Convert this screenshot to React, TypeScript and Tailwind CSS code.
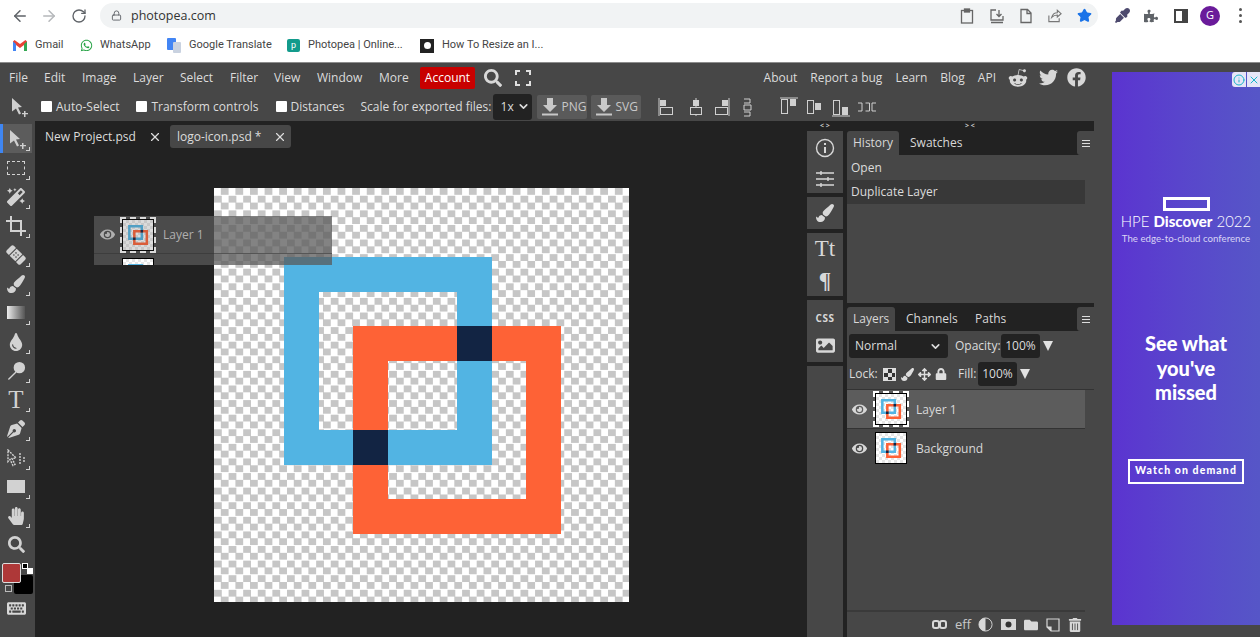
import type { ReactNode } from "react";
import { ArrowLeft, ArrowRight, RotateCw, Lock, Star, ChevronDown, X, Info } from "lucide-react";
import {
  FaMagic, FaBandAid, FaPaintBrush, FaTint, FaPenNib, FaHandPaper, FaSearch, FaKeyboard,
  FaFolder, FaTrashAlt, FaImage, FaEye, FaLock, FaArrowsAlt, FaPuzzlePiece,
  FaEyeDropper, FaRedditAlien, FaTwitter, FaFacebook, FaWhatsapp,
} from "react-icons/fa";

function Art({ size }: { size: number }) {
  return (
    <svg width={size} height={size} viewBox="0 0 415 415" className="block">
      <path d="M70 69h208v208H70z M105 104v138h138V104z" fill="#52b4e3" fillRule="evenodd" />
      <path d="M139 138h208v208H139z M174 173v138h138V173z" fill="#fe6236" fillRule="evenodd" />
      <rect x="243" y="138" width="35" height="35" fill="#122443" />
      <rect x="139" y="242" width="35" height="35" fill="#122443" />
    </svg>
  );
}

function Thumb({ dashed }: { dashed?: boolean }) {
  return (
    <div className={`w-[32px] h-[32px] border border-black bg-[repeating-conic-gradient(#e6e6e6_0_25%,#fff_0_50%)] bg-[length:6px_6px] shrink-0 ${dashed ? "outline-2 outline-dashed outline-white" : ""}`}>
      <Art size={30} />
    </div>
  );
}

function Tool({ children, active, noCorner }: { children: ReactNode; active?: boolean; noCorner?: boolean }) {
  return (
    <div className={`relative h-[29px] w-[32px] flex items-center justify-center text-[#d2d2d2] ${active ? "bg-[#5c5c5c] border-l-[3px] border-[#3f86f2]" : ""}`}>
      {children}
      {!noCorner && <span className="absolute right-[2px] bottom-[2px] w-[4px] h-[4px] border-r border-b border-[#d2d2d2]" />}
    </div>
  );
}

function MoveIcon({ size = 20 }: { size?: number }) {
  return (
    <svg width={size} height={size} viewBox="0 0 20 20" fill="#cfcfcf">
      <path d="M2 1l10 9-4 .5 3 6-2 1-3-6-4 3z" />
      <path d="M14 14h1.500v2H18v1.300h-2.500V20H14v-2.700h-2V16h2z" />
    </svg>
  );
}

function AlignIcon({ kind }: { kind: number }) {
  const stroke = "#d0d0d0";
  const shapes: Record<number, ReactNode> = {
    0: <><path d="M1 1v18" stroke={stroke} /><rect x="2" y="3" width="6" height="6" fill={stroke} /><rect x="2.500" y="10.500" width="12" height="7" fill="none" stroke={stroke} /></>,
    1: <><path d="M9 1v18" stroke={stroke} /><rect x="6" y="3" width="6" height="6" fill={stroke} /><rect x="3.500" y="10.500" width="11" height="7" fill="#474747" stroke={stroke} /></>,
    2: <><path d="M16 1v18" stroke={stroke} /><rect x="9" y="3" width="6" height="6" fill={stroke} /><rect x="2.500" y="10.500" width="12" height="7" fill="none" stroke={stroke} /></>,
    3: <><path d="M6 2h6v4H6M6 8h7v5H6zM6 15h6v4H6" fill="none" stroke={stroke} /></>,
    4: <><path d="M1 1h18" stroke={stroke} /><rect x="2.500" y="2.500" width="6" height="14" fill="none" stroke={stroke} /><rect x="11" y="2" width="6" height="7" fill={stroke} /></>,
    5: <><rect x="2.500" y="3.500" width="6" height="13" fill="none" stroke={stroke} /><rect x="10" y="6" width="6" height="7" fill={stroke} /></>,
    6: <><path d="M1 19h18" stroke={stroke} /><rect x="2.500" y="3.500" width="6" height="14" fill="none" stroke={stroke} /><rect x="11" y="10" width="6" height="8" fill={stroke} /></>,
    7: <><path d="M1 6h4v8H1M8.500 6h4v8h-4M19 6h-4v8h4" fill="none" stroke={stroke} /></>,
  };
  return <svg width="20" height="20" viewBox="0 0 20 20">{shapes[kind]}</svg>;
}

function SideGroup({ children, h }: { children: ReactNode; h: string }) {
  return <div className={`${h} bg-[#474747] flex flex-col items-center justify-around text-[#d8d8d8]`}>{children}</div>;
}

function Check11() {
  return <input type="checkbox" readOnly className="block appearance-none w-[11px] h-[11px] bg-white rounded-[1px]" />;
}

function ExportBtn({ label }: { label: string }) {
  return (
    <div className="flex items-center gap-[4px] h-[24px] w-[50px] pl-[5px] bg-[#5a5a5a] rounded-[2px] text-[#c8c8c8]">
      <svg width="16" height="18" viewBox="0 0 16 18" fill="#c8c8c8"><path d="M5 0h6v7h4l-7 7-7-7h4z" /><rect y="15.500" width="16" height="2" /></svg>
      <span>{label}</span>
    </div>
  );
}

function Tri() {
  return <span className="block w-0 h-0 border-l-[5px] border-r-[5px] border-t-[10px] border-l-transparent border-r-transparent border-t-[#e2e2e2]" />;
}

function LayerRow({ name, selected, dashed }: { name: string; selected?: boolean; dashed?: boolean }) {
  return (
    <div className={`h-[38px] flex items-center w-[238px] ${selected ? "bg-[#5c5c5c]" : ""}`}>
      <FaEye size={15} className="ml-[5px] text-[#d8d8d8]" />
      <div className="ml-[8px]"><Thumb dashed={dashed} /></div>
      <span className="ml-[9px] pt-[2px] text-[#d8d8d8]">{name}</span>
    </div>
  );
}

function PanelTabs({ tabs }: { tabs: { label: string; w: string; pl: string; on?: boolean }[] }) {
  return (
    <div className="h-[24px] bg-[#222] flex items-stretch text-[#d8d8d8]">
      {tabs.map((t) => (
        <div key={t.label} className={`${t.w} ${t.pl} flex items-center ${t.on ? "bg-[#474747] rounded-t-[3px]" : ""}`}>{t.label}</div>
      ))}
      <div className="ml-auto w-[17px] bg-[#474747] rounded-l-[3px] flex flex-col items-center justify-center gap-[2px]">
        <span className="w-[8px] h-px bg-[#ddd]" /><span className="w-[8px] h-px bg-[#ddd]" /><span className="w-[8px] h-px bg-[#ddd]" />
      </div>
    </div>
  );
}

export default function App() {
  const menuItems = [
    ["File", "w-[35px]"], ["Edit", "w-[38px]"], ["Image", "w-[51px]"], ["Layer", "w-[47px]"], ["Select", "w-[50px]"],
    ["Filter", "w-[44px]"], ["View", "w-[43px]"], ["Window", "w-[62px]"], ["More", "w-[41px]"],
  ];
  return (
    <div className="w-[1260px] h-[640px] overflow-hidden bg-white flex flex-col font-['Open_Sans',sans-serif] text-[12px]">
      {/* browser chrome */}
      <div className="h-[63px] shrink-0 border-b border-[#8c8c8c] text-[#444]">
        <div className="h-[31px] flex items-center">
          <ArrowLeft size={18} className="ml-[11px] text-[#5f6368]" />
          <ArrowRight size={18} className="ml-[11px] text-[#b5b8bb]" />
          <RotateCw size={16} className="ml-[13px] text-[#5f6368]" />
          <div className="ml-[13px] w-[998px] h-[25px] rounded-full bg-[#f1f3f4] flex items-center pl-[11px]">
            <Lock size={11} className="text-[#5f6368]" />
            <span className="ml-[9px] pt-[1px] text-[12.500px] text-[#333]">photopea.com</span>
            <div className="ml-auto flex items-center gap-[15px] pr-[6px] text-[#666]">
              <svg width="14" height="16" viewBox="0 0 14 16" fill="none" stroke="#666" strokeWidth="1.300"><rect x="1.500" y="2.500" width="11" height="12.500" /><rect x="4.500" y="1" width="5" height="3" fill="#666" /></svg>
              <svg width="16" height="16" viewBox="0 0 16 16" fill="none" stroke="#666" strokeWidth="1.300"><path d="M7 2H2v10h12V8M10 2v6M7.500 6l2.500 2.500L12.500 6M2 14.500h12" /></svg>
              <svg width="12" height="16" viewBox="0 0 12 16" fill="none" stroke="#666" strokeWidth="1.300"><path d="M1 1.500h6.500l3.500 3.500v9.500H1zM7 1.500v4h4" /></svg>
              <svg width="15" height="15" viewBox="0 0 16 16" fill="none" stroke="#777" strokeWidth="1.200"><path d="M2 8v6.500h11V11M5 10c1-4 4-5 6-5V2.500L15 6l-4 3.500V7.500c-2 0-4 .5-6 2.500z" /></svg>
              <Star size={15} fill="#1a73e8" className="text-[#1a73e8]" />
            </div>
          </div>
          <FaEyeDropper size={15} className="ml-[17px] text-[#4d4a6e]" />
          <FaPuzzlePiece size={14} className="ml-[14px] text-[#5f6368]" />
          <svg width="14" height="14" viewBox="0 0 14 14" className="ml-[16px]"><rect x="1" y="1" width="12" height="12" fill="none" stroke="#444" strokeWidth="2" /><rect x="8" y="1" width="5" height="12" fill="#444" /></svg>
          <div className="ml-[12px] w-[20px] h-[20px] rounded-full bg-[#6a1b9a] text-white text-[11px] flex items-center justify-center">G</div>
          <div className="ml-[19px] flex flex-col gap-[3px]">
            <span className="w-[3px] h-[3px] rounded-full bg-[#555]" /><span className="w-[3px] h-[3px] rounded-full bg-[#555]" /><span className="w-[3px] h-[3px] rounded-full bg-[#555]" />
          </div>
        </div>
        <div className="h-[29px] flex items-center text-[11px] text-[#444] font-['Roboto',sans-serif]">
          <svg width="14" height="11" viewBox="0 0 14 11" className="ml-[13px]"><path d="M0 1.500V11h3V5l4 3 4-3v6h3V1.500L12.500 0 7 4 1.500 0z" fill="#ea4335" /><path d="M0 1.500V11h3V4z" fill="#4285f4" /><path d="M11 4v7h3V1.500z" fill="#34a853" /></svg>
          <span className="ml-[8px] w-[45px]">Gmail</span>
          <FaWhatsapp size={13} className="text-[#25a244]" />
          <span className="ml-[7px] w-[67px]">WhatsApp</span>
          <svg width="14" height="15" viewBox="0 0 14 15"><rect x="0" y="0" width="9" height="12" rx="1" fill="#4285f4" /><rect x="6" y="4" width="8" height="11" rx="1" fill="#c9d2e0" /></svg>
          <span className="ml-[8px] w-[98px]">Google Translate</span>
          <div className="w-[13px] h-[13px] rounded-[2px] bg-[#139b8c] flex items-center justify-center text-white text-[9px] leading-none">p</div>
          <span className="ml-[8px] w-[112px]">Photopea | Online...</span>
          <div className="w-[14px] h-[14px] bg-[#222] flex items-center justify-center"><span className="w-[7px] h-[7px] rounded-full bg-white" /></div>
          <span className="ml-[8px]">How To Resize an I...</span>
        </div>
      </div>

      {/* app */}
      <div className="h-[574px] shrink-0 bg-[#474747] flex text-[#dcdcdc]">
        <div className="w-[1094px] flex flex-col shrink-0">
          <div className="h-[29px] flex items-center">
            <div className="w-[9px]" />
            {menuItems.map(([label, w]) => (
              <span key={label} className={w}>{label}</span>
            ))}
            <span className="h-[22px] w-[55px] rounded-[2px] bg-[#c80000] text-white flex items-center justify-center">Account</span>
            <FaSearch size={18} className="ml-[9px] text-[#d8d8d8]" />
            <svg width="16" height="16" viewBox="0 0 16 16" fill="none" stroke="#e0e0e0" strokeWidth="2" className="ml-[13px]"><path d="M1 5V1h4M11 1h4v4M15 11v4h-4M5 15H1v-4" /></svg>
            <span className="ml-auto">About</span>
            <span className="ml-[13px]">Report a bug</span>
            <span className="ml-[13px]">Learn</span>
            <span className="ml-[13px]">Blog</span>
            <span className="ml-[13px]">API</span>
            <FaRedditAlien size={20} className="ml-[12px] text-[#d8d8d8]" />
            <FaTwitter size={19} className="ml-[11px] text-[#d8d8d8]" />
            <FaFacebook size={19} className="ml-[9px] mr-[8px] text-[#d8d8d8]" />
          </div>
          <div className="h-[29px] flex items-center">
            <div className="ml-[10px] w-[20px]"><MoveIcon /></div>
            <div className="ml-[11px]"><Check11 /></div>
            <span className="ml-[4px]">Auto-Select</span>
            <div className="ml-[17px]"><Check11 /></div>
            <span className="ml-[4px]">Transform controls</span>
            <div className="ml-[17px]"><Check11 /></div>
            <span className="ml-[4px]">Distances</span>
            <span className="ml-[16px] w-[132px] whitespace-nowrap">Scale for exported files:</span>
            <div className="w-[39px] h-[26px] bg-[#222] rounded-[3px] flex items-center pl-[8px] gap-[3px]">1x<ChevronDown size={13} strokeWidth={3} /></div>
            <div className="ml-[5px]"><ExportBtn label="PNG" /></div>
            <div className="ml-[4px]"><ExportBtn label="SVG" /></div>
            <div className="ml-[17px]"><AlignIcon kind={0} /></div>
            <div className="ml-[9px]"><AlignIcon kind={1} /></div>
            <div className="ml-[6px]"><AlignIcon kind={2} /></div>
            <div className="ml-[5px]"><AlignIcon kind={3} /></div>
            <div className="ml-[21px] flex gap-[6px]"><AlignIcon kind={4} /><AlignIcon kind={5} /><AlignIcon kind={6} /><AlignIcon kind={7} /></div>
          </div>

          <div className="flex-1 flex min-h-0">
            {/* tools */}
            <div className="w-[35px] shrink-0 pt-[3px] flex flex-col">
              <Tool active><MoveIcon /></Tool>
              <Tool><span className="w-[18px] h-[14px] border border-dashed border-[#d2d2d2]" /></Tool>
              <Tool><FaMagic size={18} /></Tool>
              <Tool><svg width="20" height="20" viewBox="0 0 20 20" fill="none" stroke="#d2d2d2" strokeWidth="2"><path d="M5 0v15h15M0 5h15v15" /></svg></Tool>
              <Tool><FaBandAid size={20} className="rotate-45" /></Tool>
              <Tool><FaPaintBrush size={18} /></Tool>
              <Tool><span className="w-[18px] h-[13px] bg-gradient-to-r from-[#eee] to-[#555]" /></Tool>
              <Tool><FaTint size={18} /></Tool>
              <Tool><svg width="19" height="19" viewBox="0 0 20 20" fill="#d2d2d2"><circle cx="13" cy="7" r="6" /><path d="M9 11L1 19l1 1 8-8z" /></svg></Tool>
              <Tool><span className="font-['Liberation_Serif',serif] text-[25px] leading-none">T</span></Tool>
              <Tool><FaPenNib size={18} /></Tool>
              <Tool><svg width="18" height="18" viewBox="0 0 18 18" fill="none" stroke="#d2d2d2" strokeWidth="1.400" strokeDasharray="2 1"><path d="M1 1l8 8-4 .5 3 6-2 1-3-6-2 2zM13 4v12M17 8v6" /></svg></Tool>
              <Tool><span className="w-[18px] h-[13px] bg-[#d2d2d2]" /></Tool>
              <Tool><FaHandPaper size={18} /></Tool>
              <Tool noCorner><FaSearch size={17} /></Tool>
              <div className="relative mt-[3px] h-[36px] w-[35px]">
                <span className="absolute left-[2px] top-[1px] w-[19px] h-[20px] bg-[#ae3838] border border-[#ddd] rounded-[2px] z-10" />
                <span className="absolute left-[14px] top-[13px] w-[19px] h-[19px] bg-black rounded-[2px]" />
                <span className="absolute left-[22px] top-[1px] w-[6px] h-[6px] bg-black border border-white" />
                <span className="absolute left-[27px] top-[6px] w-[6px] h-[6px] bg-white" />
                <span className="absolute left-[5px] top-[23px] w-[7px] h-[7px] border border-[#bbb]" />
              </div>
              <div className="mt-[1px] flex justify-center pr-[2px] text-[#d8d8d8]"><FaKeyboard size={19} /></div>
            </div>

            {/* workspace */}
            <div className="relative w-[772px] shrink-0 bg-[#222]">
              <div className="h-[31px] pt-[4px] flex text-[#dcdcdc]">
                <div className="w-[135px] h-[23px] pl-[10px] flex items-center whitespace-nowrap">
                  New Project.psd
                  <X size={14} className="ml-[12px]" />
                </div>
                <div className="w-[121px] h-[23px] pl-[7px] flex items-center bg-[#474747] rounded-[3px] whitespace-nowrap">
                  logo-icon.psd *
                  <X size={14} className="ml-[12px]" />
                </div>
              </div>
              <div className="ml-[179px] mt-[36px] w-[415px] h-[414px] bg-[repeating-conic-gradient(#c6c6c6_0_25%,#fff_0_50%)] bg-[length:14.600px_14.600px]">
                <Art size={415} />
              </div>

              {/* dragged layer */}
              <div className="absolute left-[59px] top-[95px] w-[238px] h-[49px] bg-[#5a5a5a]/75 overflow-hidden">
                <div className="h-[38px] flex items-center border-b border-[#333]/70 opacity-80">
                  <FaEye size={15} className="ml-[6px] text-[#c8c8c8]" />
                  <div className="ml-[7px]"><Thumb dashed /></div>
                  <span className="ml-[9px] text-[#c8c8c8]">Layer 1</span>
                </div>
                <div className="ml-[28px] mt-[4px]"><Thumb /></div>
              </div>
            </div>

            {/* right panels */}
            <div className="w-[287px] shrink-0 bg-[#222] flex flex-col">
              <div className="h-[10px] relative text-[7px] leading-[10px] font-bold text-[#ccc]">
                <span className="absolute left-[13px]">&lt; &gt;</span>
                <span className="absolute left-[158px]">&gt; &lt;</span>
              </div>
              <div className="flex-1 flex gap-[4px] min-h-0">
                <div className="w-[36px] flex flex-col gap-[4px] shrink-0">
                  <SideGroup h="h-[62px]">
                    <svg width="20" height="20" viewBox="0 0 20 20" fill="none" stroke="#d8d8d8" strokeWidth="1.400"><circle cx="10" cy="10" r="8.500" /><path d="M10 9v6M10 5v2" strokeWidth="2" /></svg>
                    <svg width="20" height="16" viewBox="0 0 20 16" fill="none" stroke="#d8d8d8" strokeWidth="1.400"><path d="M1 2h18M1 8h18M1 14h18M6 0v4M13 6v4M6 12v4" /></svg>
                  </SideGroup>
                  <SideGroup h="h-[32px]"><FaPaintBrush size={18} /></SideGroup>
                  <SideGroup h="h-[63px]">
                    <span className="font-['Liberation_Serif',serif] text-[23px] leading-none">Tt</span>
                    <span className="font-['Liberation_Serif',serif] font-bold text-[23px] leading-none">¶</span>
                  </SideGroup>
                  <SideGroup h="h-[62px]">
                    <span className="pt-[6px] text-[10px] font-bold tracking-[0.5px] leading-none">CSS</span>
                    <FaImage size={19} />
                  </SideGroup>
                  <div className="flex-1 bg-[#474747]" />
                </div>
                <div className="w-[247px] bg-[#474747] flex flex-col">
                  <PanelTabs tabs={[{ label: "History", w: "w-[52px]", pl: "pl-[6px]", on: true }, { label: "Swatches", w: "w-[74px]", pl: "pl-[11px]" }]} />
                  <div className="h-[148px] text-[#dcdcdc]">
                    <div className="h-[25px] pl-[4px] flex items-center">Open</div>
                    <div className="h-[24px] w-[238px] pl-[4px] flex items-center bg-[#383838]">Duplicate Layer</div>
                  </div>
                  <div className="h-[4px] bg-[#222]" />
                  <PanelTabs tabs={[{ label: "Layers", w: "w-[48px]", pl: "pl-[6px]", on: true }, { label: "Channels", w: "w-[69px]", pl: "pl-[11px]" }, { label: "Paths", w: "w-[44px]", pl: "pl-[11px]" }]} />
                  <div className="h-[27px] flex items-center pl-[2px] pt-[3px]">
                    <div className="w-[99px] h-[24px] bg-[#222] rounded-[3px] flex items-center justify-between px-[6px]">Normal<ChevronDown size={13} strokeWidth={3} /></div>
                    <span className="ml-[7px] w-[46px]">Opacity:</span>
                    <span className="w-[39px] h-[24px] bg-[#222] rounded-[3px] flex items-center justify-center">100%</span>
                    <span className="ml-[3px]"><Tri /></span>
                  </div>
                  <div className="h-[32px] flex items-center pl-[2px] pt-[4px] pb-[3px] border-b border-[#333]">
                    <span className="w-[29px]">Lock:</span>
                    <span className="ml-[5px] w-[13px] h-[13px] border border-[#ddd] bg-[repeating-conic-gradient(#333_0_25%,#ddd_0_50%)] bg-[length:8px_8px]" />
                    <FaPaintBrush size={13} className="ml-[5px] text-[#ddd]" />
                    <FaArrowsAlt size={13} className="ml-[4px] text-[#ddd]" />
                    <FaLock size={12} className="ml-[4px] text-[#ddd]" />
                    <span className="ml-[11px] w-[20px]">Fill:</span>
                    <span className="w-[39px] h-[24px] bg-[#222] rounded-[3px] flex items-center justify-center">100%</span>
                    <span className="ml-[3px]"><Tri /></span>
                  </div>
                  <div className="flex-1">
                    <div className="border-b border-[#333] w-[238px]"><LayerRow name="Layer 1" selected dashed /></div>
                    <LayerRow name="Background" />
                  </div>
                  <div className="h-[27px] w-[238px] border-t-2 border-[#3a3a3a] flex items-center gap-[8px] pl-[85px] text-[#d8d8d8]">
                    <svg width="15" height="9" viewBox="0 0 15 9" fill="none" stroke="#d8d8d8" strokeWidth="2"><rect x="1" y="1" width="6" height="7" rx="2" /><rect x="8" y="1" width="6" height="7" rx="2" /></svg>
                    <span className="w-[15px] text-[13px] leading-none text-[#c8c8c8]">eff</span>
                    <svg width="15" height="15" viewBox="0 0 16 16"><circle cx="8" cy="8" r="7" fill="none" stroke="#d8d8d8" /><path d="M8 1a7 7 0 010 14z" fill="#d8d8d8" transform="rotate(180 8 8)" /></svg>
                    <svg width="15" height="11" viewBox="0 0 15 11"><path d="M0 0h15v11H0z" fill="#d8d8d8" /><circle cx="7.500" cy="5.500" r="3" fill="#333" /></svg>
                    <FaFolder size={14} />
                    <svg width="14" height="14" viewBox="0 0 14 14" fill="none" stroke="#d8d8d8" strokeWidth="1.200"><path d="M1 1h12v12H5L1 9z" /><path d="M1 9h4v4" fill="#d8d8d8" /></svg>
                    <FaTrashAlt size={14} />
                  </div>
                </div>
              </div>
            </div>
          </div>
        </div>

        {/* ad */}
        <div className="flex-1 pl-[18px] pt-[9px]">
          <div className="relative w-[148px] h-[553px] bg-gradient-to-r from-[#5b33d0] to-[#5656c7] flex flex-col items-center text-white font-['Lato',sans-serif]">
            <div className="absolute right-0 top-0 flex gap-px">
              <span className="w-[14px] h-[15px] bg-white/85 flex items-center justify-center text-[#19b5c9] rounded-l-[3px]"><Info size={12} /></span>
              <span className="w-[13px] h-[15px] bg-white/85 flex items-center justify-center text-[#19b5c9]"><X size={12} /></span>
            </div>
            <div className="mt-[125px] w-[47px] h-[14px] border-[3px] border-white" />
            <div className="text-[15px] leading-[20px] whitespace-nowrap font-light">HPE <span className="font-black">Discover</span> 2022</div>
            <div className="mt-[1px] text-[9.700px] leading-[13px] text-[#d9d5f5] whitespace-nowrap">The edge-to-cloud conference</div>
            <div className="mt-[86px] text-[20px] leading-[24.500px] font-black text-center">See what<br />you've<br />missed</div>
            <div className="mt-[54px] w-[116px] h-[25px] border-2 border-white flex items-center justify-center text-[10.500px] font-black tracking-[1.100px] whitespace-nowrap">Watch on demand</div>
          </div>
        </div>
      </div>
    </div>
  );
}
